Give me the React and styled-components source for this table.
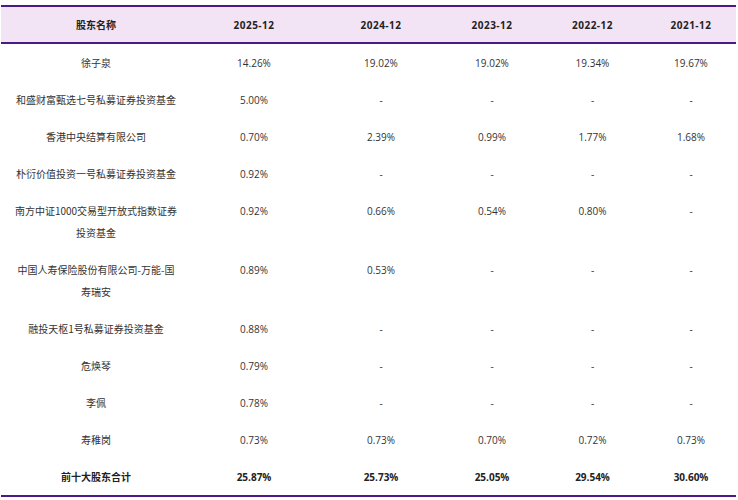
import React from "react";
import styled, { createGlobalStyle } from "styled-components";

const Global = createGlobalStyle`
  html, body { margin: 0; padding: 0; background: #fff; }
  body { font-family: "Open Sans", "Noto Sans CJK SC", sans-serif; }
`;

const Wrap = styled.div`
  padding: 5px 2px 0 1px;
  width: 738px;
  box-sizing: border-box;
`;

const Table = styled.table`
  width: 735px;
  border-collapse: collapse;
  table-layout: fixed;
  border-top: 2px solid #4a1a88;
  border-bottom: 2px solid #4a1a88;
  font-size: 10px;
  color: #333;
`;

const Th = styled.th`
  background: #f3e4f5;
  height: 35px;
  padding: 0;
  font-weight: 700;
  text-align: center;
  color: #222;
  border-bottom: 2px solid #4a1a88;
  font-family: "Noto Sans CJK SC", "Open Sans", sans-serif;
  ${(p) => p.$num && `font-family: "Open Sans", sans-serif; letter-spacing: 0.5px;`}
`;

const Td = styled.td`
  padding: 7.5px ${(p) => (p.$cjk ? "12px" : "6px")};
  line-height: 22px;
  text-align: center;
  vertical-align: top;
  font-weight: ${(p) => (p.$bold ? 700 : 400)};
  font-family: ${(p) => (p.$cjk ? `"Noto Sans CJK SC", sans-serif` : `"Open Sans", sans-serif`)};
  color: ${(p) => (p.$bold ? "#222" : "#333")};
`;

const widths = [190, 126, 128, 94, 107, 90];
const years = ["2025-12", "2024-12", "2023-12", "2022-12", "2021-12"];

const rows = [
  ["徐子泉", "14.26%", "19.02%", "19.02%", "19.34%", "19.67%"],
  ["和盛财富甄选七号私募证券投资基金", "5.00%", "-", "-", "-", "-"],
  ["香港中央结算有限公司", "0.70%", "2.39%", "0.99%", "1.77%", "1.68%"],
  ["朴衍价值投资一号私募证券投资基金", "0.92%", "-", "-", "-", "-"],
  ["南方中证1000交易型开放式指数证券投资基金", "0.92%", "0.66%", "0.54%", "0.80%", "-"],
  ["中国人寿保险股份有限公司-万能-国寿瑞安", "0.89%", "0.53%", "-", "-", "-"],
  ["融投天枢1号私募证券投资基金", "0.88%", "-", "-", "-", "-"],
  ["危焕琴", "0.79%", "-", "-", "-", "-"],
  ["李佩", "0.78%", "-", "-", "-", "-"],
  ["寿稚岗", "0.73%", "0.73%", "0.70%", "0.72%", "0.73%"],
];

const total = ["前十大股东合计", "25.87%", "25.73%", "25.05%", "29.54%", "30.60%"];

export default function App() {
  return (
    <>
      <Global />
      <Wrap>
        <Table>
          <colgroup>
            {widths.map((w, i) => (
              <col key={i} style={{ width: w }} />
            ))}
          </colgroup>
          <thead>
            <tr>
              <Th>股东名称</Th>
              {years.map((y) => (
                <Th key={y} $num>
                  {y}
                </Th>
              ))}
            </tr>
          </thead>
          <tbody>
            {rows.map((r, i) => (
              <tr key={i}>
                {r.map((c, j) => (
                  <Td key={j} $cjk={j === 0}>
                    {c}
                  </Td>
                ))}
              </tr>
            ))}
            <tr>
              {total.map((c, j) => (
                <Td key={j} $cjk={j === 0} $bold>
                  {c}
                </Td>
              ))}
            </tr>
          </tbody>
        </Table>
      </Wrap>
    </>
  );
}
